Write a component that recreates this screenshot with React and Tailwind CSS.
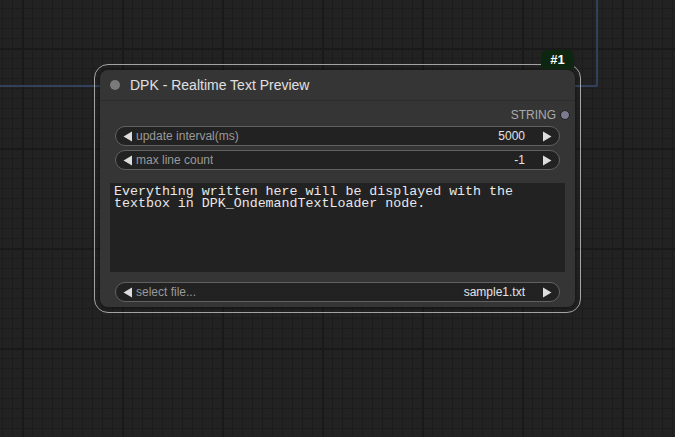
import { useState } from 'react';

function ArrowLeft() {
  return (
    <svg width="10" height="11" viewBox="0 0 10 11" className="shrink-0">
      <path d="M9 0.5 L9 10.5 L0.5 5.5 Z" fill="#dddddd" />
    </svg>
  );
}

function ArrowRight() {
  return (
    <svg width="10" height="11" viewBox="0 0 10 11" className="shrink-0">
      <path d="M1 0.5 L1 10.5 L9.5 5.5 Z" fill="#dddddd" />
    </svg>
  );
}

function Widget({ label, value }) {
  return (
    <div className="flex items-center h-[20px] mx-[15px] pl-[7px] pr-[7px] rounded-full bg-[#222222] border border-[#616161] text-[12px]">
      <ArrowLeft />
      <span className="ml-[3px] text-[#999999] truncate">{label}</span>
      <span className="ml-auto mr-[17px] text-[#e4e4e4]">{value}</span>
      <ArrowRight />
    </div>
  );
}

export default function App() {
  const [text, setText] = useState(
    "Everything written here will be displayed with the\ntextbox in DPK_OndemandTextLoader node."
  );

  return (
    <div className="relative w-[675px] h-[437px] overflow-hidden bg-[#222222] bg-[linear-gradient(to_right,#191919_2px,transparent_2px),linear-gradient(to_bottom,#191919_2px,transparent_2px),linear-gradient(to_right,#1c1c1c_1px,transparent_1px),linear-gradient(to_bottom,#1c1c1c_1px,transparent_1px)] bg-[length:100px_100px,100px_100px,10px_10px,10px_10px] bg-[position:22px_48px] font-['Liberation_Sans',Arial,sans-serif]">
      {/* link wire passing behind the node */}
      <div className="absolute left-0 top-[85px] w-[597px] h-[1.5px] bg-[#33405c]" />
      <div className="absolute left-[596px] top-0 w-[1.5px] h-[86px] bg-[#33405c]" />

      {/* node */}
      <div className="absolute left-[94px] top-[64px] w-[487px] h-[249px] rounded-[14px] border-[1.5px] border-[#a3a3a3] p-[5px]">
        <div className="absolute right-[6px] -top-[15px] w-[33px] h-[19px] rounded-t-[6px] bg-[#0d2610] text-white text-[13px] font-bold leading-[19px] text-center">
          #1
        </div>
        <div className="flex flex-col h-full rounded-[8px] bg-[#353535] shadow-[0_0_4px_rgba(0,0,0,0.5)]">
          <div className="flex items-center h-[31px] border-b border-[#2c2c2c] pl-[10px]">
            <div className="w-[10px] h-[10px] rounded-full bg-[#7a7a7a]" />
            <span className="ml-[10px] text-[14px] text-[#e0e0e0]">DPK - Realtime Text Preview</span>
          </div>
          <div className="flex items-center justify-end h-[25px] pr-[5px] pt-[2px]">
            <span className="text-[12px] text-[#a9a9a9]">STRING</span>
            <div className="ml-[4px] w-[10px] h-[10px] rounded-full bg-[#7b7a8f] border-[1.5px] border-[#1e1e1e]" />
          </div>
          <div className="flex flex-col gap-[4px]">
            <Widget label="update interval(ms)" value="5000" />
            <Widget label="max line count" value="-1" />
          </div>
          <textarea
            value={text}
            onChange={(e) => setText(e.target.value)}
            spellCheck={false}
            className="mx-[10px] mt-[13px] h-[89px] resize-none bg-[#222222] text-[#e8e8e8] px-[4px] pt-[3px] text-[13.3px] leading-[12.3px] font-['Liberation_Mono','DejaVu_Sans_Mono',monospace] outline-none"
          />
          <div className="mt-[10px]">
            <Widget label="select file..." value="sample1.txt" />
          </div>
        </div>
      </div>
    </div>
  );
}
